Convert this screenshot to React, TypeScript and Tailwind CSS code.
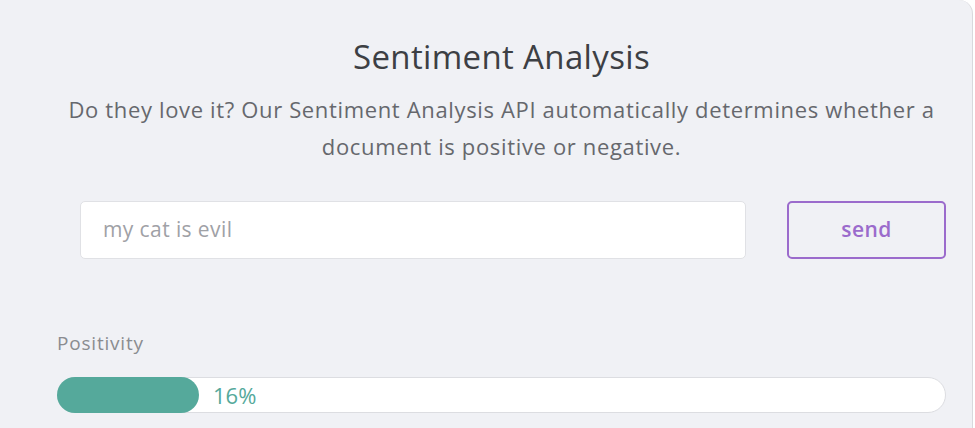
import React from "react";

export default function App() {
  return (
    <div className="w-[975px] h-[428px] bg-white overflow-hidden" style={{ fontFamily: "'Open Sans', Lato, sans-serif" }}>
      <div className="w-[973px] h-[440px] bg-[#f0f1f5] rounded-tr-[14px] border-r border-[#d8d9dd] flex flex-col pl-[57px] pr-[26px]">
        <h1 className="mt-[34px] text-center text-[33px] leading-[46px] tracking-[0.35px] text-[#3d3f44] font-normal">Sentiment Analysis</h1>
        <p className="mt-[11px] text-center text-[22px] leading-[37px] tracking-[0.65px] text-[#66686d] whitespace-nowrap">
          Do they love it? Our Sentiment Analysis API automatically determines whether a<br />document is positive or negative.
        </p>
        <div className="mt-[36px] flex items-center pl-[23px] gap-[41px]">
          <div className="flex-1 h-[58px] bg-white border border-[#e0e1e5] rounded-[5px] flex items-center px-[22px] text-[21px] tracking-[0.4px] text-[#9fa1a6]">
            my cat is evil
          </div>
          <button className="w-[159px] h-[58px] border-2 border-[#9b6bcc] rounded-[5px] text-[21px] tracking-[0.4px] font-semibold text-[#9b6bcc] bg-transparent">
            send
          </button>
        </div>
        <div className="mt-[71px] text-[19px] leading-[26px] tracking-[0.8px] text-[#8a8c90]">Positivity</div>
        <div className="mt-[21px] h-[36px] bg-white border border-[#dcdde1] rounded-full flex items-center">
          <div className="h-[36px] -ml-px bg-[#55a99b] rounded-full" style={{ width: 142 }} />
          <span className="ml-[14px] text-[22px] text-[#55a99b]">16%</span>
        </div>
      </div>
    </div>
  );
}
